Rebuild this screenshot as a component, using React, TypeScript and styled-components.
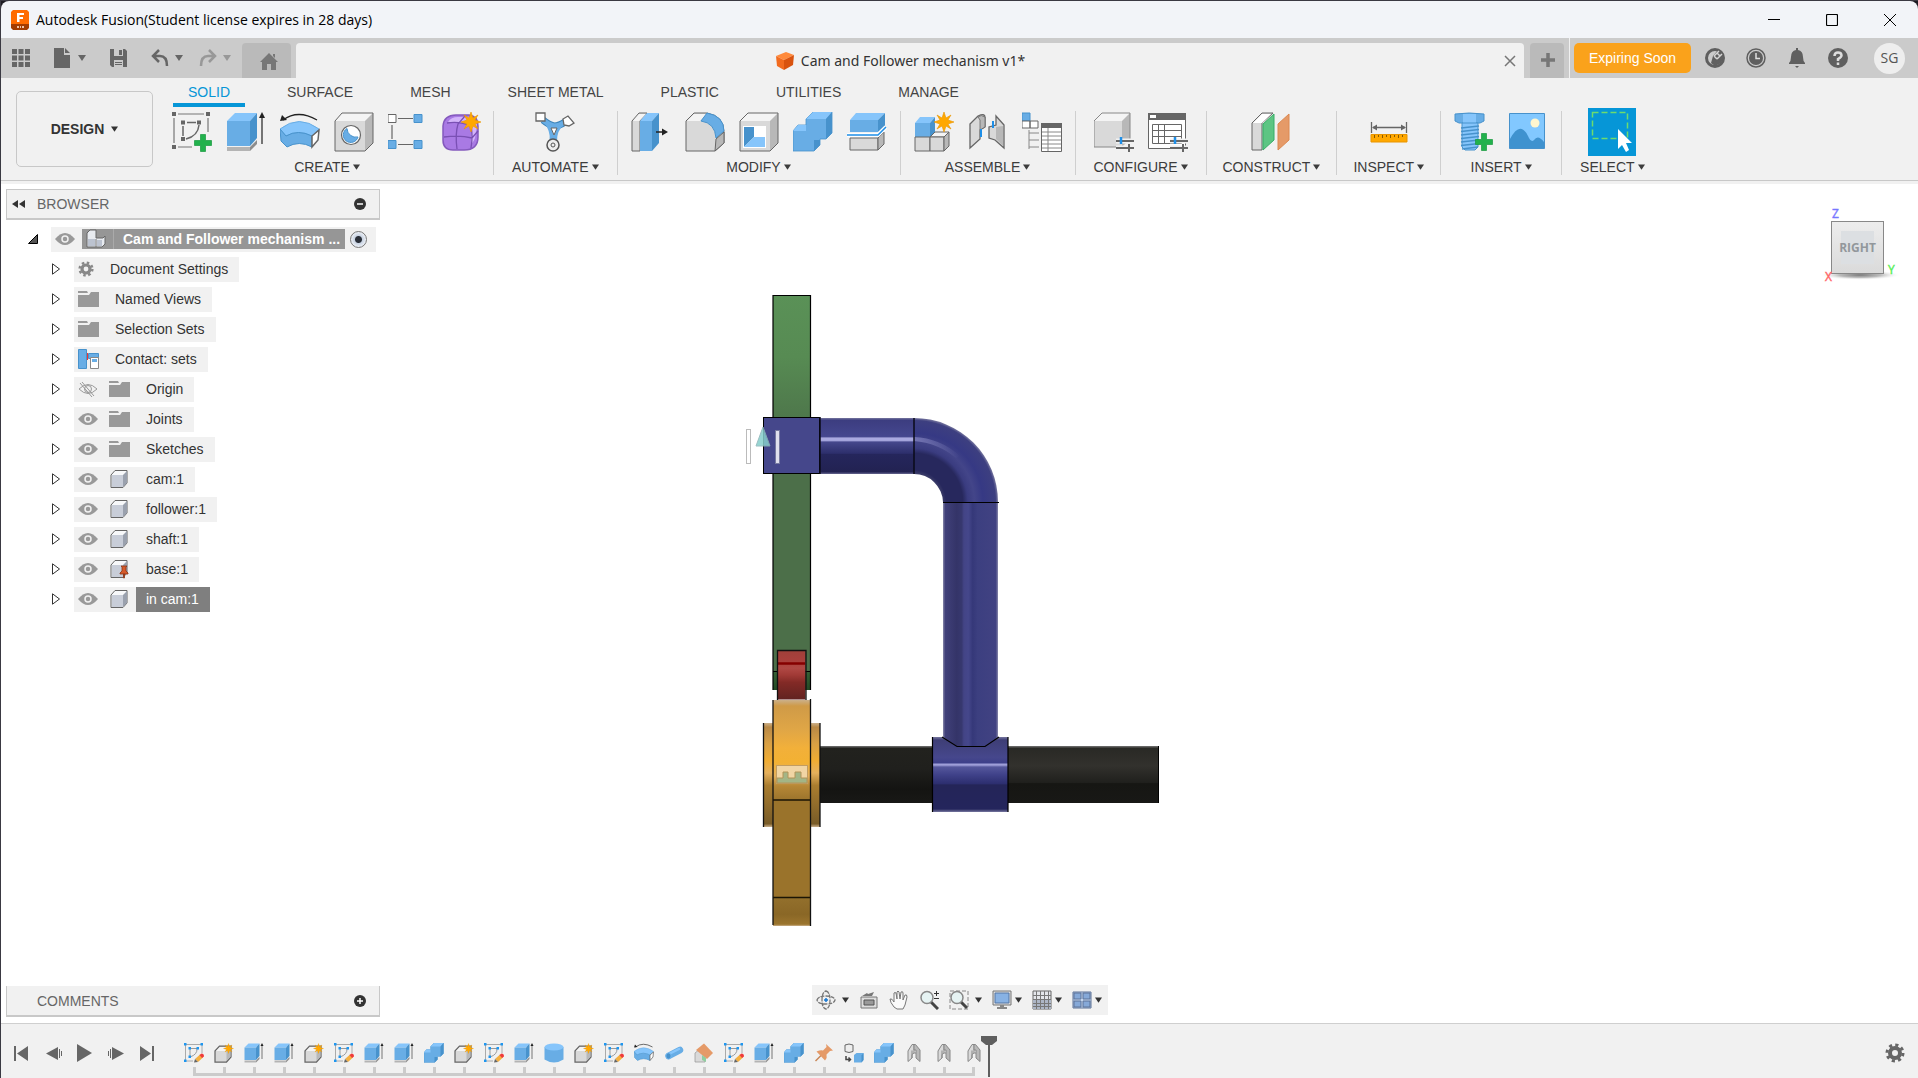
import React from "react";
import styled, { createGlobalStyle } from "styled-components";

const GlobalStyle = createGlobalStyle`
  * { box-sizing: border-box; }
  body { margin: 0; background: #1c1b22; }
  button { font: inherit; color: inherit; background: none; border: 0; padding: 0; cursor: pointer; }
  svg { display: block; flex: none; }
`;

const ui = `"Liberation Sans", Arial, sans-serif`;
const humanist = `"Open Sans", "Noto Sans", sans-serif`;

/* ---------- shell ---------- */

const Shell = styled.div`
  min-height: 100vh;
  display: flex;
  flex-direction: column;
  border-left: 1px solid #3a3942;
  border-top: 1px solid #3a3942;
  font: 14px/16px ${ui};
  color: #333;
`;

const TitleBar = styled.header`
  height: 37px;
  display: flex;
  align-items: center;
  gap: 7px;
  padding-left: 10px;
  background: #f2f4f8;
  border-radius: 8px 8px 0 0;
  color: #000;
  font: 14px/20px ${humanist};
  h1 { flex: 1; margin: 0; font: inherit; }
`;

const WindowControls = styled.div`
  display: flex;
  gap: 10px;
  padding-right: 4px;
  button { width: 48px; height: 36px; display: grid; place-items: center; }
`;

const TabBar = styled.div`
  height: 40px;
  display: flex;
  align-items: stretch;
  background: #cbcbcb;
  color: #666;
`;

const QuickTools = styled.div`
  display: flex;
  align-items: center;
  gap: 22px;
  padding-left: 10px;
`;

const ToolGroup = styled.div<{ $gap: number }>`
  display: flex;
  align-items: center;
  gap: ${(p) => p.$gap}px;
`;

const ToolButton = styled.button<{ $faded?: boolean }>`
  display: flex;
  align-items: center;
  gap: 5px;
  opacity: ${(p) => (p.$faded ? 0.5 : 1)};
`;

const ShortTab = styled.button<{ $w: number; $ml: number }>`
  width: ${(p) => p.$w}px;
  margin: 5px 0 0 ${(p) => p.$ml}px;
  padding-left: 4px;
  display: grid;
  place-items: center;
  background: #bababa;
  border-radius: 4px 4px 0 0;
  color: #777;
`;

const DocumentTab = styled.div`
  flex: 1;
  margin: 5px 0 0 5px;
  display: flex;
  align-items: center;
  padding: 1px 8px 0 0;
  background: #f1f1f1;
  border-radius: 4px 4px 0 0;
  color: #333;
  font: 14px/20px "Noto Sans", "Open Sans", sans-serif;
  > button:last-child { color: #777; }
`;

const DocumentName = styled.button`
  flex: 1;
  display: flex;
  justify-content: center;
  align-items: center;
  gap: 6px;
`;

const Account = styled.div`
  display: flex;
  align-items: center;
  margin-left: 5px;
  padding: 0 13px 0 4px;
  border-left: 1px solid #f1f1f1;
  color: #5f5f5f;
`;

const LicenseButton = styled.button`
  width: 117px;
  height: 30px;
  margin-right: 14px;
  border-radius: 5px;
  background: #faa21b;
  color: #fff;
`;

const Avatar = styled.button`
  width: 31px;
  height: 31px;
  margin-left: 26px;
  border-radius: 50%;
  background: #eee;
  color: #555;
  font: 14px/20px ${humanist};
`;

/* ---------- ribbon ---------- */

const Ribbon = styled.section`
  display: flex;
  gap: 8px;
  height: 106px;
  padding-left: 15px;
  background: #f1f1f1;
  border-bottom: 3px solid #f1f1f1;
  box-shadow: inset 0 -1px #c8c8c8;
`;

const WorkspaceButton = styled.button`
  width: 137px;
  height: 76px;
  margin-top: 13px;
  display: flex;
  align-items: center;
  justify-content: center;
  gap: 7px;
  border: 1px solid #c8c8c8;
  border-radius: 5px;
  font-weight: bold;
`;

const RibbonTabs = styled.nav`
  display: flex;
  gap: 27px;
  padding-left: 12px;
`;

const RibbonTab = styled.button<{ $active?: boolean }>`
  height: 29px;
  padding: 3px 15px 0;
  border-bottom: 4px solid ${(p) => (p.$active ? "#0696d7" : "transparent")};
  color: ${(p) => (p.$active ? "#0696d7" : "#444")};
`;

const Panels = styled.div`
  display: flex;
  margin-top: 4px;
`;

const Panel = styled.div<{ $pad: number }>`
  height: 64px;
  display: flex;
  flex-direction: column;
  align-items: center;
  gap: 7px;
  padding: 1px ${(p) => p.$pad}px 0;
  border-right: 1px solid #cfcfcf;
  &:last-child { border: 0; }
`;

const IconRow = styled.div`
  display: flex;
  gap: 14px;
`;

const SelectedTool = styled.button`
  width: 48px;
  height: 48px;
  margin: -4px;
  background: #0696d7;
`;

const PanelLabel = styled.button`
  display: flex;
  align-items: center;
  gap: 3px;
  white-space: nowrap;
  color: #3c3c3c;
`;

/* ---------- viewport ---------- */

const Viewport = styled.main`
  position: relative;
  flex: 1;
  min-height: 700px;
  display: flex;
  align-items: center;
  justify-content: center;
  background: #fff;
`;

const BrowserDock = styled.aside`
  position: absolute;
  top: 5px;
  left: 5px;
  width: 374px;
`;

const CommentsDock = styled.aside`
  position: absolute;
  bottom: 6px;
  left: 5px;
  width: 374px;
`;

const DockHeader = styled.div<{ $flatTop?: boolean }>`
  height: 31px;
  display: flex;
  align-items: center;
  padding: 0 13px 0 4px;
  background: #f1f1f1;
  border: 1px solid #c8c8c8;
  border-bottom-width: 2px;
  border-top-width: ${(p) => (p.$flatTop ? 0 : 1)}px;
  color: #666;
  h2 { flex: 1; margin: 0; font: inherit; }
`;

const HeaderSlot = styled.span`
  width: 26px;
  display: flex;
`;

const Tree = styled.ul`
  list-style: none;
  margin: 0;
  padding: 4px 0 0;
`;

const TreeRow = styled.li<{ $root?: boolean }>`
  height: 30px;
  display: flex;
  align-items: center;
  padding-left: ${(p) => (p.$root ? 22 : 45)}px;
`;

const Expander = styled.button<{ $w: number }>`
  width: ${(p) => p.$w}px;
`;

const Entry = styled.div`
  height: 25px;
  display: flex;
  align-items: center;
  background: #f1f1f1;
  color: #888;
`;

const IconCell = styled.span`
  width: 31px;
  display: flex;
  padding-left: 4px;
`;

const EntryLabel = styled.button<{ $picked?: boolean; $tight?: boolean }>`
  height: 25px;
  padding: 0 11px 0 ${(p) => (p.$tight ? 5 : 10)}px;
  background: ${(p) => (p.$picked ? "#7f7f7f" : "none")};
  color: ${(p) => (p.$picked ? "#fff" : "#333")};
`;

const RootEntry = styled(Entry)`
  flex: 1;
  margin-right: 4px;
`;

const RootName = styled.button`
  width: 263px;
  height: 20px;
  display: flex;
  align-items: center;
  background: #969696;
  color: #fff;
  font-weight: bold;
`;

const RootTitle = styled.span`
  padding-left: 9px;
  border-left: 1px solid #aaa;
  line-height: 20px;
  white-space: nowrap;
`;

const ActiveRadio = styled.input`
  appearance: none;
  width: 17px;
  height: 17px;
  margin: 0 0 0 5px;
  border: 1px solid #777;
  border-radius: 50%;
  background: radial-gradient(circle, #2a2f38 0 3px, #c9d3e2 4px, #f2f5fa 8px);
`;

const CubeSlot = styled.div`
  position: absolute;
  top: 16px;
  right: 17px;
`;

const NavBar = styled.div`
  position: absolute;
  bottom: 8px;
  left: 50%;
  transform: translateX(-50%);
  height: 30px;
  display: flex;
  align-items: center;
  gap: 10px;
  padding: 0 6px 0 4px;
  background: #f1f1f1;
`;

const NavButton = styled.button<{ $gap: number }>`
  display: flex;
  align-items: center;
  gap: ${(p) => p.$gap}px;
`;

/* ---------- timeline ---------- */

const Timeline = styled.footer`
  height: 55px;
  display: flex;
  align-items: flex-start;
  padding: 0 13px 0 11px;
  background: #f1f1f1;
  border-top: 1px solid #cfcfcf;
  color: #666;
`;

const Playback = styled.div`
  display: flex;
  gap: 11px;
  padding: 19px 23px 0 0;
`;

const History = styled.ol`
  list-style: none;
  display: flex;
  margin: 0;
  padding: 19px 0 0;
`;

const Step = styled.li`
  width: 30px;
  display: flex;
  flex-direction: column;
  align-items: center;
  gap: 4px;
  &::after {
    content: "";
    width: 30px;
    height: 9px;
    background: linear-gradient(#cbcbcb, #cbcbcb) center / 3px 100% no-repeat,
      linear-gradient(#cbcbcb, #cbcbcb) bottom / 100% 3px no-repeat;
  }
  &:first-child::after, &:last-child::after {
    background: linear-gradient(#cbcbcb, #cbcbcb) center / 3px 100% no-repeat,
      linear-gradient(#cbcbcb, #cbcbcb) bottom right / 16px 3px no-repeat;
  }
  &:last-child::after { transform: scaleX(-1); }
`;

const Marker = styled.button`
  margin: 12px 0 0 -8px;
`;

const SettingsButton = styled.button`
  margin: 19px 0 0 auto;
`;

/* ---------- shared glyphs ---------- */

const T = "#86c5fb", F = "#68ade5", S = "#4792cc";
const GT = "#f4f4f4", GF = "#d9d9d9", GS = "#b8b8b8", K = "#666";

const Caret = ({ w = 8 }: { w?: number }) => (
  <svg width={w} height="6" viewBox="0 0 8 6" fill="currentColor"><path d="M0 0H8L4 6Z" /></svg>
);

const Art = ({ size = 40, children }: { size?: number; children: React.ReactNode }) => (
  <svg width={size} height={size} viewBox="0 0 40 40" fill="none">{children}</svg>
);

const Small = ({ w = 20, h = 20, children }: { w?: number; h?: number; children: React.ReactNode }) => (
  <svg width={w} height={h} viewBox={`0 0 ${w} ${h}`} fill="none">{children}</svg>
);

const Star = ({ x, y }: { x: number; y: number }) => (
  <path transform={`translate(${x} ${y})`} fill="#ffa800" stroke="#e99500" strokeWidth=".6"
    d="M0-10 2-4 7-7 4-2 10 0 4 2 7 7 2 4 0 10-2 4-7 7-4 2-10 0-4-2-7-7-2-4Z" />
);

const Plus = ({ x = 31, y = 31 }: { x?: number; y?: number }) => (
  <path transform={`translate(${x} ${y})`} fill="#22b14c" stroke="#179a3e" strokeWidth=".7"
    d="M-2.500-8.500H2.500V-2.500H8.500V2.500H2.500V8.500H-2.500V2.500H-8.500V-2.500H-2.500Z" />
);

const SketchIcon = () => (
  <Art>
    <path d="M6 2H32M36 6V20M2 6V31M6 35H20" stroke="#777" strokeWidth="1.200" />
    <path d="M15 10.500H24M11 14V24M27 13Q26 24 14 27" stroke={K} strokeWidth="1.500" />
    <path fill={K} d="M0 0h4v4H0zM34 0h4v4h-4zM0 33h4v4H0zM9 8.500h4v4H9zM25 8.500h4v4h-4zM9 25h4v4H9z" />
    <Plus />
  </Art>
);

const EditSketchIcon = () => (
  <Art size={20}>
    <path d="M3 3H36V20M3 3V36H18" stroke="#aaa" strokeWidth="2" />
    <path d="M12 11H26Q27 23 12 28Z" stroke="#999" strokeWidth="2" />
    <path fill="#1e96f0" d="M0 0h5v5H0zM33 0h5v5h-5zM0 33h5v5H0zM9 8h5v5H9zM25 8h5v5h-5zM9 25h5v5H9z" />
    <path fill="#f5b041" d="m22 32 10-9 6 6-10 9z" /><path fill="#ef3b3b" d="m31 24 4-3q5 0 5 6l-4 3z" />
    <path fill="#666" d="m20 39 2-7 6 6z" />
  </Art>
);

const ExtrudeIcon = ({ size }: { size?: number }) => (
  <Art size={size}>
    <path fill={T} d="M1 9 9 1H31L24 9Z" /><path fill={F} d="M1 9H24V34H1Z" /><path fill={S} d="M24 9 31 1V26L24 34Z" />
    <path fill="#b4b4b4" d="M1 35H24V39H1Z" /><path fill="#8c8c8c" d="M24 35 31 28V32L24 39Z" />
    <path d="M36 32V3" stroke="#222" strokeWidth="1.200" /><path fill="#222" d="M36 0 39 6H33Z" />
  </Art>
);

const RevolveIcon = ({ size }: { size?: number }) => (
  <Art size={size}>
    <path d="M3 8Q18-3 37 8" stroke="#222" strokeWidth="1.300" /><path fill="#222" d="M0 9 2 3 7 8Z" />
    <path fill={T} stroke={F} d="M0 17Q19 2 39 17L32 24Q18 17 6 24Z" />
    <path fill={F} stroke={S} d="M0 17 6 24Q18 17 32 24V35Q19 28 7 35L1 29Z" />
    <path fill="#fff" stroke={K} strokeWidth="1.500" d="M32 24 39 18 38 28 32 35Z" />
  </Art>
);

const HoleIcon = () => (
  <Art>
    <path fill={GT} d="M1 9 8 1H39L31 9Z" /><path fill={GF} d="M1 9H31V39H1Z" /><path fill={GS} d="M31 9 39 1V31L31 39Z" />
    <path stroke={K} d="M1 9 8 1H39V31L31 39H1Z" />
    <circle cx="17" cy="23" r="9.500" fill="#fff" stroke={K} strokeWidth="1.200" />
    <path fill={F} stroke={S} d="M13 16.500A7.500 7.500 0 1 0 24 25 9 9 0 0 1 13 16.500Z" />
  </Art>
);

const PatternIcon = () => (
  <Art>
    <path d="M10 6.500H25M4 13V27M10 32.500H25" stroke={K} strokeWidth="1.200" />
    <path fill="#fff" stroke={K} d="M0 2.500h8v8H0z" />
    <path fill={F} stroke={S} d="M26 2.500h8v8h-8zM0 28.500h8v8H0zM26 28.500h8v8h-8z" />
  </Art>
);

const FormIcon = () => (
  <Art>
    <path fill="#a97ae4" stroke="#8459bd" strokeWidth="1.500" d="M1 14Q2 3 14 3H27Q36 4 36 14V25Q36 38 22 38H11Q1 38 1 28Z" />
    <path fill="#d3b4fa" d="M6 10Q9 5 16 5H28Q34 7 35 14L33 26Q31 31 29 32V14Q27 11 22 11H10Z" />
    <path stroke="#7a50b4" strokeWidth="1.300" d="M2 25Q18 23 30 26L36 19M15 37Q13 22 16 12L23 4M29 36Q31 24 29 14L34 8M5 11Q18 9 29 14" />
    <Star x={29} y={10} />
  </Art>
);

const AutomateIcon = () => (
  <Art>
    <path stroke="#3b83b9" strokeWidth="7" d="M8 8Q14 13 19 14Q24 14 30 10M19 14 18 32" />
    <path stroke={F} strokeWidth="5" d="M8 8Q14 13 19 14Q24 14 30 10M19 14 18 32" />
    <path fill={F} d="M10 12Q15 18 15 29H22Q22 18 29 13Q19 15 10 12Z" />
    <path fill="#fff" stroke={K} d="M16 16H22L19 23Z" />
    <path fill="#fff" stroke={K} strokeWidth="1.300" d="M1 1h9v8H1zM28 7 33 4 39 11 34 14 29 13Z" />
    <circle cx="18" cy="33" r="6" fill="#eee" stroke="#555" strokeWidth="1.500" /><circle cx="18" cy="33" r="2" stroke="#555" />
  </Art>
);

const PressPullIcon = () => (
  <Art>
    <path fill={GF} stroke={K} d="M1 9 8 1H16L9 9V39H1Z" /><path fill={GT} d="M2 9 8 2H15L8 9Z" />
    <path fill={T} d="M9 9 16 1H28L21 9Z" /><path fill={F} d="M9 9H21V39H9Z" /><path fill={S} d="M21 9 28 1V31L21 39Z" />
    <path d="M25 20H33" stroke="#222" strokeWidth="1.500" /><path fill="#222" d="M31 16.500 37 20 31 23.500Z" />
  </Art>
);

const FilletIcon = () => (
  <Art>
    <path fill={GF} stroke={K} d="M1 9 9 1H22Q39 4 39 20V31L30 39H1Z" />
    <path fill={GT} d="M2 9 9 2H22L15 9Z" />
    <path fill={F} stroke={S} d="M22 1Q39 4 39 19L31 26Q30 11 16 9Z" />
    <path fill={GS} stroke={K} d="M31 27 39 20V31L30 39Z" />
  </Art>
);

const ShellIcon = () => (
  <Art>
    <path fill={GT} d="M1 9 9 1H39L31 9Z" /><path fill={GF} d="M1 9H31V39H1Z" /><path fill={GS} d="M31 9 39 1V31L31 39Z" />
    <path stroke={K} d="M1 9 9 1H39V31L31 39H1Z" />
    <path fill="#fff" d="M4 14H27V36H4Z" /><path fill={S} d="M5 15H15V25L5 35Z" /><path fill={T} d="M15 25H26V35H5Z" />
  </Art>
);

const CombineIcon = ({ size }: { size?: number }) => (
  <Art size={size}>
    <path fill={F} stroke={S} strokeWidth=".800" d="M0 19 5 13H13V7L20 0H39V21L33 27H27V33L21 39H0Z" />
    <path fill={T} d="M0 19 5 13H13V19ZM13 7 20 0H39L33 7Z" />
    <path fill={S} d="M33 7 39 0V21L33 27ZM21 28H27V33L21 39Z" />
  </Art>
);

const SplitIcon = () => (
  <Art>
    <path fill={T} d="M3 8 9 1H38L31 8Z" /><path fill={F} d="M3 8H31V20H3Z" /><path fill={S} d="M31 8 38 1V14L31 20Z" />
    <path fill={GF} stroke={K} d="M3 26H31V38H3Z" /><path fill={GS} stroke={K} d="M31 26 37 20V32L31 38Z" />
    <path stroke="#fff" strokeWidth="4" d="M0 23H31L39 15" /><path stroke="#1e8fe8" strokeWidth="1.500" d="M0 23H31L39 15" />
  </Art>
);

const NewComponentIcon = () => (
  <Art>
    <path fill={F} d="M1 11H16V25H1Z" /><path fill={T} d="M1 11 6 5H21L16 11Z" /><path fill={S} d="M16 11 21 5V20L16 25Z" />
    <path fill={GF} stroke={K} d="M1 25H16V39H1Z" /><path fill={GT} stroke={K} d="M16 25 21 20H35L30 25Z" />
    <path fill={GF} stroke={K} d="M16 25H30V39H16Z" /><path fill={GS} stroke={K} d="M30 25 35 20V34L30 39Z" />
    <Star x={30} y={10} />
  </Art>
);

const JointIcon = () => (
  <Art>
    <path fill={GF} stroke={K} strokeWidth="1.300" d="M2 12 10 4Q17 1 17 5V15L12 18V27L2 36Z" />
    <path fill={GS} stroke={K} strokeWidth=".800" d="M10 5Q13 2 17 5V15L12 18V8Z" />
    <path fill={GF} stroke={K} strokeWidth="1.300" d="M36 13 28 4V13L21 15V26L27 28 36 36Z" />
    <path fill={GS} d="M28 15 35 14V34L28 27Z" />
    <path stroke="#1e8fe8" strokeWidth="2" d="M13 17V25M25 9V16" />
  </Art>
);

const JointStepIcon = () => (
  <Art size={20}>
    <path fill={GF} stroke="#888" strokeWidth="2" d="M8 16 16 3H20V20L16 23V30L8 37Z" />
    <path fill={GS} stroke="#888" strokeWidth="2" d="M20 3H23L32 14V37L24 30V14H20Z" />
    <path stroke="#888" strokeWidth="2" d="M16 15V30M20 20H24" />
  </Art>
);

const BomIcon = () => (
  <Art>
    <path fill={F} stroke={S} d="M0 1h8v8H0z" /><path fill="#fff" stroke={K} d="M0 9h8v7H0zM8 9h8v7H8z" />
    <path stroke="#888" d="M7 18V37M7 21H17M7 28H17M7 35H17" />
    <path fill="#fff" stroke={K} d="M19.500 11.500H39.500V39.500H19.500Z" /><path fill={K} d="M19 11H40V16H19Z" />
    <path stroke="#888" d="M20 20H39M20 24H39M20 28H39M20 32H39M20 36H39M26 16V39" />
  </Art>
);

const Sliders = () => (
  <>
    <path stroke="#f1f1f1" strokeWidth="5" d="M22 29H40M22 36H40" />
    <path stroke={K} strokeWidth="2" d="M22 29H40M22 36H40M35 32V40" /><path stroke="#1e8fe8" strokeWidth="2.500" d="M27 25V32" />
  </>
);

const ConfigureIcon = () => (
  <Art>
    <path fill={GT} d="M0 9 8 1H36L28 9Z" /><path fill={GF} d="M0 9H28V35H0Z" /><path fill={GS} d="M28 9 36 1V27L28 35Z" />
    <path stroke="#888" d="M0 9 8 1H36V27M0 9V35H22" /><Sliders />
  </Art>
);

const ConfigTableIcon = () => (
  <Art>
    <path fill="#fff" stroke={K} d="M.500 1.500H37.500V36.500H.500Z" /><path fill={K} d="M0 1H38V8H0Z" /><path fill="#fff" d="M2 3H8V6H2Z" />
    <path stroke={K} d="M4.500 12.500H33.500V31.500H4.500ZM4.500 18.500H33.500M4.500 24.500H33.500M10.500 12V31M16.500 12V31" /><Sliders />
  </Art>
);

const PlaneIcon = () => (
  <Art>
    <path fill={GF} stroke={K} d="M1 11 11 1H22L11 11V38H1Z" /><path fill="#fff" d="M2 11 11 2H20L11 11Z" />
    <path fill="#5dc583" stroke="#37ad66" d="M12 12 23 2V28L12 38Z" />
    <path fill="#e59a68" stroke="#dc8850" d="M27 12 38 2V28L27 38Z" />
  </Art>
);

const MeasureIcon = () => (
  <Art>
    <path stroke={K} d="M2.500 10V21M37.500 10V21M4 15.500H36" strokeWidth="1.300" /><path fill={K} d="M3 15.500 8 12.500V18.500ZM37 15.500 32 12.500V18.500Z" />
    <path fill="#ffa800" stroke="#e99500" d="M2 22.500H38V30H2Z" />
    <path stroke="#885800" d="M5.500 23V26M9.500 23V25M13.500 23V26M17.500 23V25M21.500 23V26M25.500 23V25M29.500 23V26M33.500 23V25" />
  </Art>
);

const BoltIcon = () => (
  <Art>
    <path fill={F} stroke={S} d="M1 2Q15 0 30 2V9L26 11H5L1 9Z" /><path fill={T} d="M9 2H22V11H9Z" />
    <path fill={T} stroke={S} d="M8 11H24V35L21 38H11L8 35Z" />
    <path stroke={S} strokeWidth="1.300" d="M7 16 25 14M7 19.500 25 17.500M7 23 25 21M7 26.500 25 24.500M7 30 25 28M7 33.500 25 31.500M8 37 24 35" />
    <Plus x={30} y={30} />
  </Art>
);

const CanvasIcon = () => (
  <Art>
    <path fill="#82c8ff" stroke={S} d="M1.500 1.500H36.500V36.500H1.500Z" /><circle cx="27" cy="11" r="4.500" fill="#fff6cf" />
    <path fill="#3f92cf" d="M2 27Q12 8 20 24 23 31 26 28 30 22 36 30V36H2Z" />
  </Art>
);

const SelectIcon = () => (
  <svg width="48" height="48" viewBox="0 0 48 48" fill="none">
    <path d="M4.500 4.500H39.500V30.500H4.500Z" stroke="#6ddc6d" strokeWidth="1.500" strokeDasharray="6 3" />
    <path fill="#fff" d="M30 21V41L34 37 38 44 41 42 38 35H44Z" />
  </svg>
);

const CylinderIcon = () => (
  <Art size={20}><path fill={F} d="M1 8V33Q20 45 39 33V8Z" /><ellipse cx="20" cy="8" rx="19" ry="7" fill={T} /></Art>
);
const ComponentStepIcon = () => (
  <Art size={20}>
    <path fill={GF} stroke={K} strokeWidth="2.500" d="M2 16 11 6H34V28L25 38H2Z" /><path fill={GT} d="M4 16 12 8H30L24 16Z" /><path fill={GS} d="M25 16 33 9V27L25 36Z" /><Star x={29} y={11} />
  </Art>
);
const PipeIcon = () => (
  <Art size={20}><path stroke={F} strokeWidth="13" strokeLinecap="round" d="M9 26 32 14" /><path stroke={T} strokeWidth="5" strokeLinecap="round" d="M12 21 30 12" /><ellipse cx="9" cy="26" rx="5" ry="6" fill={S} stroke={T} /></Art>
);
const SplitStepIcon = () => (
  <Art size={20}><path fill={GF} stroke="#999" strokeWidth="1.500" d="M2 20 12 12 22 22V38H2Z" /><path fill="#e59a68" d="M4 14 20 1 38 20 26 32Z" /><path fill="#8fce9f" d="M16 24 24 30V38L16 34Z" /></Art>
);
const PinIcon = () => (
  <Art size={20}><path stroke="#c88455" strokeWidth="3" d="M3 36 15 24" /><path fill="#e59a68" d="M5 17Q14 13 18 15L25 8 24 2 38 15 32 16 25 23Q27 29 22 35Z" /></Art>
);
const CopyIcon = () => (
  <Art size={20}><path fill="#eee" stroke={K} strokeWidth="2" d="M2 4Q10 0 18 4V17Q10 21 2 17Z" /><path stroke="#444" strokeWidth="3" d="M4 26V33H12M9 29 13 33 9 37" /><path fill={F} d="M20 24 25 20H39V34L35 39H20Z" /><path fill={S} d="M35 25 39 20V34L35 39Z" /></Art>
);

const Eye = ({ off }: { off?: boolean }) => off ? (
  <Small><path stroke="#999" d="M1 10Q10 1 19 10 10 19 1 10ZM4 3 16 17M2 4 14 18" /><circle cx="10" cy="10" r="3.500" stroke="#999" /></Small>
) : (
  <Small><path fill="#999" d="M0 10Q10-2 20 10 10 22 0 10Z" /><circle cx="10" cy="10" r="3" stroke="#f1f1f1" strokeWidth="1.500" /></Small>
);
const Folder = () => <Small w={21}><path fill="#999" d="M0 2H9L10 4H0ZM0 6H11L13 3H21V18H0Z" /></Small>;
const BodyIcon = ({ pinned }: { pinned?: boolean }) => (
  <Small>
    <path fill="#f7f8fa" stroke="#666" d="M2 6 6 1.500H18V14L14 18.500H2Z" /><path fill="#c8cdd8" d="M3 6H14V18H3Z" /><path fill="#9aa1ae" d="M14 6 18 2V14L14 18Z" />
    {pinned && <path fill="#d65a2b" stroke="#8c3414" strokeWidth=".800" d="M12 7H18L17 8V12L19 14V15H11V14L13 12V8ZM14.500 15h1v4h-1z" />}
  </Small>
);
const AssemblyIcon = () => (
  <Small><path fill="#e8ebf0" stroke="#666" d="M1 4 4 1H10V9H17L19 7V15L16 18H1Z" /><path fill="#bcc3d0" d="M2 10H9V17H2ZM11 11H16V17H11Z" /><path stroke="#777" d="M10 10V18" /></Small>
);
const Gear = ({ size = 20 }: { size?: number }) => (
  <svg width={size} height={size} viewBox="0 0 20 20" fill="none">
    <circle cx="10" cy="10" r="5" stroke="currentColor" strokeWidth="4" />
    <circle cx="10" cy="10" r="8" stroke="currentColor" strokeWidth="3" strokeDasharray="3.142 3.142" />
  </svg>
);
const ContactIcon = () => (
  <Small w={21}><path fill={F} stroke={S} d="M.500.500h8v19h-8zM10.500 4.500h10v5h-10z" /><path stroke="#e33" d="M9.500 4V11" /><path fill="#fff" stroke="#888" d="M12.500 8.500h8v11h-8z" /><path fill={F} d="M14 10h5v3h-5z" /></Small>
);

const RoundSign = ({ plus }: { plus?: boolean }) => (
  <Small w={12} h={12}><circle cx="6" cy="6" r="6" fill="#333" /><path stroke="#fff" strokeWidth="1.500" d={plus ? "M3 6H9M6 3V9" : "M3 6H9"} /></Small>
);

/* ---------- 3D model ---------- */

const Model = () => (
  <svg width="433" height="649" viewBox="743 279 433 649" role="img" aria-label="Cam and follower assembly">
    <defs>
      <linearGradient id="green" x2="0" y2="1"><stop offset="0" stopColor="#5a9157" /><stop offset=".5" stopColor="#578b53" /><stop offset="1" stopColor="#4e774b" /></linearGradient>
      <linearGradient id="foot" x2="0" y2="1"><stop stopColor="#366236" /><stop offset="1" stopColor="#234a24" /></linearGradient>
      <linearGradient id="arm" x2="0" y2="1">
        <stop stopColor="#77779f" /><stop offset=".04" stopColor="#3c3d80" /><stop offset=".33" stopColor="#45478f" /><stop offset=".36" stopColor="#a9a9e0" /><stop offset=".4" stopColor="#a9a9e0" /><stop offset=".43" stopColor="#45478c" /><stop offset=".63" stopColor="#2d2f6c" /><stop offset=".65" stopColor="#25265c" /><stop offset=".96" stopColor="#222252" /><stop offset="1" stopColor="#666690" />
      </linearGradient>
      <radialGradient id="elbow" gradientUnits="userSpaceOnUse" cx="914" cy="502" r="84">
        <stop offset=".34" stopColor="#3a3b68" /><stop offset=".38" stopColor="#27285d" /><stop offset=".58" stopColor="#27285d" /><stop offset=".64" stopColor="#3a3c80" /><stop offset=".72" stopColor="#434589" /><stop offset=".82" stopColor="#363984" /><stop offset=".97" stopColor="#3d3f80" /><stop offset="1" stopColor="#77779f" />
      </radialGradient>
      <linearGradient id="glint" x2="1"><stop stopColor="#aaaae0" /><stop offset="1" stopColor="#aaaae0" stopOpacity="0" /></linearGradient>
      <linearGradient id="post" x2="1">
        <stop stopColor="#8888aa" /><stop offset=".04" stopColor="#40407a" /><stop offset=".25" stopColor="#343468" /><stop offset=".34" stopColor="#37386f" /><stop offset=".38" stopColor="#434486" /><stop offset=".46" stopColor="#45478b" /><stop offset=".54" stopColor="#353879" /><stop offset=".63" stopColor="#3c3f80" /><stop offset=".96" stopColor="#414282" /><stop offset="1" stopColor="#8888aa" />
      </linearGradient>
      <linearGradient id="collar" x2="0" y2="1">
        <stop stopColor="#77779f" /><stop offset=".04" stopColor="#3e3e76" /><stop offset=".27" stopColor="#46478c" /><stop offset=".34" stopColor="#3e408a" /><stop offset=".37" stopColor="#aaaae2" /><stop offset=".4" stopColor="#55579c" /><stop offset=".5" stopColor="#40428a" /><stop offset=".62" stopColor="#2d2f70" /><stop offset=".64" stopColor="#242558" /><stop offset=".96" stopColor="#24255c" /><stop offset="1" stopColor="#77779f" />
      </linearGradient>
      <linearGradient id="shaft" x2="0" y2="1"><stop stopColor="#777" /><stop offset=".04" stopColor="#22221e" /><stop offset=".4" stopColor="#20201d" /><stop offset=".75" stopColor="#141412" /><stop offset="1" stopColor="#181816" /></linearGradient>
      <linearGradient id="shaftEnd" x2="0" y2="1"><stop stopColor="#777" /><stop offset=".04" stopColor="#292925" /><stop offset=".35" stopColor="#32312d" /><stop offset=".64" stopColor="#20201d" /><stop offset=".66" stopColor="#161613" /><stop offset="1" stopColor="#181816" /></linearGradient>
      <linearGradient id="cam" x2="0" y2="1">
        <stop stopColor="#cbb08a" /><stop offset=".06" stopColor="#cf9a47" /><stop offset=".3" stopColor="#e0a646" /><stop offset=".48" stopColor="#f2b03a" /><stop offset=".62" stopColor="#f3b133" /><stop offset=".76" stopColor="#e5b05c" /><stop offset=".86" stopColor="#b68736" /><stop offset="1" stopColor="#9c742c" />
      </linearGradient>
      <linearGradient id="hub" x2="0" y2="1">
        <stop stopColor="#cbb08a" /><stop offset=".04" stopColor="#b98946" /><stop offset=".2" stopColor="#d9a044" /><stop offset=".36" stopColor="#f0ac32" /><stop offset=".48" stopColor="#e5b05c" /><stop offset=".6" stopColor="#aa7d2f" /><stop offset=".97" stopColor="#795c28" /><stop offset="1" stopColor="#cbb08a" />
      </linearGradient>
      <linearGradient id="camBase" x2="0" y2="1"><stop stopColor="#93702d" /><stop offset=".6" stopColor="#8a6726" /><stop offset=".94" stopColor="#9b752e" /><stop offset="1" stopColor="#cbb08a" /></linearGradient>
      <linearGradient id="roller" x2="0" y2="1"><stop stopColor="#a0403a" /><stop offset=".2" stopColor="#a9403c" /><stop offset=".36" stopColor="#b04844" /><stop offset=".5" stopColor="#a13a36" /><stop offset=".65" stopColor="#832a26" /><stop offset="1" stopColor="#612221" /></linearGradient>
    </defs>

    <rect x="773" y="295" width="37" height="123" fill="url(#green)" />
    <rect x="773" y="474" width="37" height="197" fill="#4c6f49" />
    <rect x="773" y="671" width="37" height="19" fill="url(#foot)" />
    <path d="M773 690V295.500H810.500V690M773 671.500H810" fill="none" stroke="#000" strokeWidth="1.200" />

    <rect x="820" y="418" width="94" height="56" fill="url(#arm)" />
    <path d="M914 418A84 84 0 0 1 998 502H943A29 29 0 0 0 914 474Z" fill="url(#elbow)" />
    <path d="M914 437Q940 438 960 456L956 458Q938 443 914 441Z" fill="url(#glint)" opacity=".5" />
    <rect x="763.500" y="417.500" width="56" height="56" fill="#45478b" stroke="#000" />
    <path d="M820 417V474M914 418V474" stroke="#0a0a18" strokeWidth="1.500" />

    <rect x="820" y="746" width="112" height="57" fill="url(#shaft)" />
    <rect x="1008" y="746" width="151" height="57" fill="url(#shaftEnd)" /><path d="M1158.500 746V803" stroke="#000" />
    <rect x="932" y="737" width="76" height="75" fill="url(#collar)" />
    <path d="M943 502H998V737L985 746H957L943 737Z" fill="url(#post)" />
    <path d="M943 502.500H999M942 737 957 746.500H985L999 737M932.500 737V812M1008 737V812" fill="none" stroke="#000" strokeWidth="1.200" />

    <rect x="763" y="723" width="57" height="104" fill="url(#hub)" /><path d="M763.500 723V827M820 723V827" stroke="#111" strokeWidth="1.300" />
    <rect x="773" y="700" width="37" height="100" fill="url(#cam)" />
    <rect x="773" y="800" width="37" height="97" fill="#9a732b" /><rect x="773" y="897" width="37" height="29" fill="url(#camBase)" />
    <path d="M773 700V925M810.500 699V926" stroke="#111" strokeWidth="1.300" /><path d="M773 800H810M773 897.500H810" stroke="#1b1505" strokeWidth="1.300" />
    <rect x="776.500" y="765.500" width="31" height="18" fill="#f1d5a4" stroke="#c29d62" />
    <path d="M777 778H783V772H788V778H795V772H801V778H807V783H777Z" fill="#a3b586" stroke="#b19458" />

    <rect x="777.500" y="650.500" width="28" height="49" fill="url(#roller)" /><path d="M778 663.500H805" stroke="#850000" strokeWidth="2.500" />
    <path d="M777.500 700V650.500H806V700" fill="none" stroke="#111" strokeWidth="1.300" />

    <rect x="746.500" y="429.500" width="4" height="34" fill="#fff" stroke="#bbb" />
    <path d="M763 427 756 446H770Z" fill="#86cfcc" stroke="#8ab5b8" opacity=".85" />
    <rect x="775.500" y="430.500" width="4" height="33" fill="#e0e0ed" stroke="#777aa0" />
  </svg>
);

const ViewCube = () => (
  <svg width="84" height="84" viewBox="1817 200 84 84" role="img" aria-label="View cube">
    <defs>
      <linearGradient id="face" x2="0" y2="1"><stop stopColor="#ededed" /><stop offset="1" stopColor="#dadada" /></linearGradient>
      <radialGradient id="shade"><stop stopColor="#777" /><stop offset=".5" stopColor="#aaa" stopOpacity=".8" /><stop offset="1" stopColor="#fff" stopOpacity="0" /></radialGradient>
    </defs>
    <ellipse cx="1860" cy="275" rx="41" ry="5" fill="url(#shade)" />
    <rect x="1831.500" y="221.500" width="52" height="52" fill="url(#face)" stroke="#888" />
    <rect x="1841" y="231" width="33" height="33" fill="#dcdfe2" />
    <g fontFamily="Open Sans, Noto Sans, sans-serif" fontSize="12">
      <text x="1857.500" y="252" textAnchor="middle" fontWeight="bold" fill="#92979b">RIGHT</text>
      <text x="1832" y="218" fill="#7777ff" stroke="#7777ff" strokeWidth=".4">Z</text>
      <text x="1825" y="281" fill="#f66" stroke="#f66" strokeWidth=".4">X</text>
      <text x="1888" y="274" fill="#5e5" stroke="#5e5" strokeWidth=".4">Y</text>
    </g>
  </svg>
);

/* ---------- data ---------- */

const tabs = ["SOLID", "SURFACE", "MESH", "SHEET METAL", "PLASTIC", "UTILITIES", "MANAGE"];

const panels: { name: string; pad: number; icons: [string, React.ReactNode][] }[] = [
  { name: "CREATE", pad: 11, icons: [["Create sketch", <SketchIcon />], ["Extrude", <ExtrudeIcon />], ["Revolve", <RevolveIcon />], ["Hole", <HoleIcon />], ["Pattern", <PatternIcon />], ["Create form", <FormIcon />]] },
  { name: "AUTOMATE", pad: 18, icons: [["Automated modeling", <AutomateIcon />]] },
  { name: "MODIFY", pad: 13, icons: [["Press pull", <PressPullIcon />], ["Fillet", <FilletIcon />], ["Shell", <ShellIcon />], ["Combine", <CombineIcon />], ["Split body", <SplitIcon />]] },
  { name: "ASSEMBLE", pad: 13, icons: [["New component", <NewComponentIcon />], ["Joint", <JointIcon />], ["Bill of materials", <BomIcon />]] },
  { name: "CONFIGURE", pad: 18, icons: [["Configure", <ConfigureIcon />], ["Configuration table", <ConfigTableIcon />]] },
  { name: "CONSTRUCT", pad: 16, icons: [["Offset plane", <PlaneIcon />]] },
  { name: "INSPECT", pad: 16, icons: [["Measure", <MeasureIcon />]] },
  { name: "INSERT", pad: 13, icons: [["Insert fastener", <BoltIcon />], ["Canvas", <CanvasIcon />]] },
];

const entries: { name: string; icons: React.ReactNode[]; picked?: boolean; tight?: boolean }[] = [
  { name: "Document Settings", icons: [<Gear size={16} />], tight: true },
  { name: "Named Views", icons: [<Folder />] },
  { name: "Selection Sets", icons: [<Folder />] },
  { name: "Contact: sets", icons: [<ContactIcon />] },
  { name: "Origin", icons: [<Eye off />, <Folder />] },
  { name: "Joints", icons: [<Eye />, <Folder />] },
  { name: "Sketches", icons: [<Eye />, <Folder />] },
  { name: "cam:1", icons: [<Eye />, <BodyIcon />] },
  { name: "follower:1", icons: [<Eye />, <BodyIcon />] },
  { name: "shaft:1", icons: [<Eye />, <BodyIcon />] },
  { name: "base:1", icons: [<Eye />, <BodyIcon pinned />] },
  { name: "in cam:1", icons: [<Eye />, <BodyIcon />], picked: true },
];

const stepIcons: Record<string, React.ReactNode> = {
  sketch: <EditSketchIcon />, component: <ComponentStepIcon />, extrude: <ExtrudeIcon size={20} />, combine: <CombineIcon size={20} />,
  cylinder: <CylinderIcon />, revolve: <RevolveIcon size={20} />, pipe: <PipeIcon />, split: <SplitStepIcon />, pin: <PinIcon />,
  copy: <CopyIcon />, joint: <JointStepIcon />,
};
const steps = "sketch component extrude extrude component sketch extrude extrude combine component sketch extrude cylinder component sketch revolve pipe split sketch extrude combine pin copy combine joint joint joint".split(" ");

const playback: [string, string][] = [
  ["Go to start", "M2 3H4V18H2ZM16 3V18L5 10.500Z"],
  ["Step back", "M15 4V17L3 10.500ZM16 6H17V15H16ZM18 8H19V13H18Z"],
  ["Play", "M3 1V19L18 10Z"],
  ["Step forward", "M7 4V17L19 10.500ZM5 6H6V15H5ZM3 8H4V13H3Z"],
  ["Go to end", "M16 3H18V18H16ZM4 3V18L15 10.500Z"],
];

const navTools: { name: string; menuGap?: number; art: React.ReactNode }[] = [
  { name: "Orbit", menuGap: 6, art: <><path stroke="#777" strokeWidth="1.300" strokeDasharray="4 1" d="M10 1Q14 2 14 10 14 18 10 19 6 18 6 10 6 2 10 1ZM1 10Q2 6 10 6 18 6 19 10 18 14 10 14 2 14 1 10Z" /><path stroke="#1677d2" strokeWidth="1.500" d="M8 10H12M10 8V12" /></> },
  { name: "Look at", art: <><path fill="#ddd" stroke="#777" d="M2 7H18V18H2Z" /><path fill="#777" d="M3 6 8 3 9 4 15 2 13 6Z" /><path fill="#9a9a9a" stroke="#555" d="M5 10H15V15H5Z" /></> },
  { name: "Pan", art: <path fill="#fafafa" stroke="#777" d="M5 17Q1 12 1 9 3 8 5 12V3Q6 2 7 3L8 9V2Q9 0 10 2L11 9 12 2Q14 1 14 3V10L16 5Q18 4 18 7L16 15 14 19H8Z" /> },
  { name: "Zoom", art: <><path stroke="#444" strokeWidth="3" d="M12 12 19 19" /><circle cx="8" cy="7.500" r="6" fill="#e6f3f3" stroke="#888" strokeWidth="1.500" /><path stroke="#333" d="M15 3.500H20M17.500 1V6M15 8.500H20" /></> },
  { name: "Fit", menuGap: 6, art: <><path stroke="#888" strokeDasharray="4 2" d="M1 1H19V19H1Z" /><path stroke="#444" strokeWidth="3" d="M12 12 18 18" /><circle cx="8" cy="7.500" r="6" fill="#e6f3f3" stroke="#888" strokeWidth="1.500" /></> },
  { name: "Display settings", menuGap: 3, art: <><path fill="#ddd" stroke="#777" d="M1 1H19V15H1Z" /><path fill="#88b2e4" stroke="#5577a5" d="M3 3H17V13H3Z" /><path fill="#888" d="M8 15H12V17H15V19H5V17H8Z" /></> },
  { name: "Grid and snaps", menuGap: 3, art: <><path fill="#e4e6ea" stroke="#666" d="M1 1H19V19H1Z" /><path fill="#adb6c6" d="M1 10H19V19H1Z" /><path stroke="#777" d="M4.500 1V19M8.500 1V19M12.500 1V19M16.500 1V19M1 5.500H19M1 9.500H19M1 13.500H19M1 16.500H19" /></> },
  { name: "Viewports", menuGap: 3, art: <><path fill="#c3d5ee" stroke="#5c7398" d="M1 2H19V18H1Z" /><path fill="#86a9d8" stroke="#5c7398" d="M2 3H9V9H2ZM11 3H18V9H11ZM2 11H9V17H2ZM11 11H18V17H11Z" /></> },
];

/* ---------- app ---------- */

export default function App() {
  return (
    <Shell>
      <GlobalStyle />
      <TitleBar>
        <svg width="18" height="20" viewBox="0 0 18 20"><path fill="#ff6b00" d="M0 2 2 0H16L18 2V15H0Z" /><path fill="#a33c00" d="M0 14H18V18L16 20H2L0 18Z" /><path fill="#fff" d="M6 3H13V5H8.500V7H12V9H8.500V12H6Z" /><path fill="#eec3a8" d="M6 16H8V18H6ZM9 16H10V18H9ZM11 16H13V18H11Z" /></svg>
        <h1>Autodesk Fusion(Student license expires in 28 days)</h1>
        <WindowControls>
          <button aria-label="Minimize"><Small w={12} h={12}><path stroke="#000" d="M0 5.500H12" /></Small></button>
          <button aria-label="Maximize"><Small w={12} h={12}><rect x=".5" y=".5" width="11" height="11" rx="1" stroke="#000" strokeWidth="1.200" /></Small></button>
          <button aria-label="Close"><Small w={12} h={12}><path stroke="#000" d="M0 0 12 12M12 0 0 12" /></Small></button>
        </WindowControls>
      </TitleBar>

      <TabBar>
        <QuickTools>
          <ToolButton aria-label="Data panel"><Small><path fill="#666" d="M1 1h5v5H1zM7.500 1h5v5h-5zM14 1h5v5h-5zM1 7.500h5v5H1zM7.500 7.500h5v5h-5zM14 7.500h5v5h-5zM1 14h5v5H1zM7.500 14h5v5h-5zM14 14h5v5h-5z" /></Small></ToolButton>
          <ToolButton aria-label="File"><Small><path fill="#666" d="M1 0H11V7H17V20H1ZM12 0 17 5H12Z" /></Small><Caret /></ToolButton>
          <ToolButton aria-label="Save"><Small><path fill="#666" fillRule="evenodd" d="M2 1H17L19 3V19H4L2 17ZM6 1V8H15V1ZM6 12V19H15V12Z" /><path fill="#666" d="M11 2h3v5h-3zM7 14h7v1H7zM7 16h7v1H7z" /></Small></ToolButton>
          <ToolGroup $gap={15}>
            <ToolButton aria-label="Undo"><Small><path stroke="#666" strokeWidth="2.500" d="M3 8H10Q17 8 17 18M9 2 3 8 9 14" /></Small><Caret /></ToolButton>
            <ToolButton aria-label="Redo" $faded><Small><path stroke="#666" strokeWidth="2.500" d="M17 8H10Q3 8 3 18M11 2 17 8 11 14" /></Small><Caret /></ToolButton>
          </ToolGroup>
        </QuickTools>
        <ShortTab $w={49} $ml={11} aria-label="Home"><Small><path fill="#777" d="M10 2 19 11H17V19H12V13H8V19H3V11H1ZM14 3H16V7L14 5Z" /></Small></ShortTab>
        <DocumentTab>
          <DocumentName>
            <Small><path fill="#ff8a3c" d="M1 5 11 1 19 4 9 9Z" /><path fill="#f26b1f" d="M1 5 9 9V19L2 15Z" /><path fill="#d9530f" d="M9 9 19 4 18 14 9 19Z" /></Small>
            Cam and Follower mechanism v1*
          </DocumentName>
          <button aria-label="Close tab"><Small w={12} h={12}><path stroke="currentColor" strokeWidth="1.500" d="M1 1 11 11M11 1 1 11" /></Small></button>
        </DocumentTab>
        <ShortTab $w={34} $ml={6} aria-label="New tab"><Small w={16} h={16}><path stroke="#777" strokeWidth="3.500" d="M7 0V14M0 7H14" /></Small></ShortTab>
        <Account>
          <LicenseButton>Expiring Soon</LicenseButton>
          <ToolGroup $gap={21}>
            <ToolButton aria-label="Extensions"><Small><circle cx="10" cy="10" r="8.500" stroke="#5f5f5f" strokeWidth="3" /><path fill="#5f5f5f" d="M6 15 8 8 13 2 19 8 16 15 10 18Z" /><path stroke="#d5d5d5" strokeWidth="1.500" d="M9 8 12 11M12 5 15 8M9 8 14 3M12 11 17 6" /></Small></ToolButton>
            <ToolButton aria-label="Job status"><Small><circle cx="10" cy="10" r="9" stroke="#5f5f5f" strokeWidth="1.500" /><circle cx="10" cy="10" r="7" fill="#5f5f5f" /><path stroke="#e0e0e0" strokeWidth="1.500" d="M10 5V10.500H14" /></Small></ToolButton>
            <ToolButton aria-label="Notifications"><Small><path fill="#5f5f5f" d="M9 0H11V2Q16 3 16 9 16 13 18 15V16H2V15Q4 13 4 9 4 3 9 2ZM8 18H12L10 20Z" /></Small></ToolButton>
            <ToolButton aria-label="Help"><Small><circle cx="10" cy="10" r="10" fill="#5f5f5f" /><path stroke="#ddd" strokeWidth="2.500" d="M6.500 8Q6.500 4.500 10 4.500 13.500 4.500 13.500 7.500 13.500 9 10 11V13M10 14.500V17" /></Small></ToolButton>
          </ToolGroup>
          <Avatar>SG</Avatar>
        </Account>
      </TabBar>

      <Ribbon>
        <WorkspaceButton>DESIGN <Caret w={7} /></WorkspaceButton>
        <div>
          <RibbonTabs>{tabs.map((t, i) => <RibbonTab key={t} $active={i === 0}>{t}</RibbonTab>)}</RibbonTabs>
          <Panels>
            {panels.map((p) => (
              <Panel key={p.name} $pad={p.pad}>
                <IconRow>{p.icons.map(([n, icon]) => <button key={n} aria-label={n}>{icon}</button>)}</IconRow>
                <PanelLabel>{p.name}<Caret w={7} /></PanelLabel>
              </Panel>
            ))}
            <Panel $pad={18}>
              <SelectedTool aria-label="Select"><SelectIcon /></SelectedTool>
              <PanelLabel>SELECT<Caret w={7} /></PanelLabel>
            </Panel>
          </Panels>
        </div>
      </Ribbon>

      <Viewport>
        <Model />
        <BrowserDock>
          <DockHeader>
            <HeaderSlot><Small w={14} h={8}><path fill="#333" d="M7 0V8L1 4ZM14 0V8L8 4Z" /></Small></HeaderSlot>
            <h2>BROWSER</h2>
            <button aria-label="Collapse browser"><RoundSign /></button>
          </DockHeader>
          <Tree>
            <TreeRow $root>
              <Expander $w={23} aria-label="Collapse"><Small w={10} h={10}><path fill="#555" stroke="#000" d="M9.500.500V9.500H.500Z" /></Small></Expander>
              <RootEntry>
                <IconCell><Eye /></IconCell>
                <RootName><IconCell><AssemblyIcon /></IconCell><RootTitle>Cam and Follower mechanism ...</RootTitle></RootName>
                <ActiveRadio type="radio" defaultChecked aria-label="Activate component" />
              </RootEntry>
            </TreeRow>
            {entries.map((e) => (
              <TreeRow key={e.name}>
                <Expander $w={23} aria-label={`Expand ${e.name}`}><Small w={10} h={12}><path fill="#fff" stroke="#333" d="M1.500.800V11.200L8.500 6Z" /></Small></Expander>
                <Entry>
                  {e.icons.map((icon, i) => <IconCell key={i}>{icon}</IconCell>)}
                  <EntryLabel $picked={e.picked} $tight={e.tight}>{e.name}</EntryLabel>
                </Entry>
              </TreeRow>
            ))}
          </Tree>
        </BrowserDock>
        <CubeSlot><ViewCube /></CubeSlot>
        <CommentsDock>
          <DockHeader $flatTop>
            <HeaderSlot />
            <h2>COMMENTS</h2>
            <button aria-label="Expand comments"><RoundSign plus /></button>
          </DockHeader>
        </CommentsDock>
        <NavBar>
          {navTools.map((n) => <NavButton key={n.name} $gap={n.menuGap ?? 0} aria-label={n.name}><Small>{n.art}</Small>{n.menuGap && <Caret w={7} />}</NavButton>)}
        </NavBar>
      </Viewport>

      <Timeline>
        <Playback>{playback.map(([n, d]) => <button key={n} aria-label={n}><Small><path fill="#666" d={d} /></Small></button>)}</Playback>
        <History>{steps.map((s, i) => <Step key={i}>{stepIcons[s]}</Step>)}</History>
        <Marker aria-label="Timeline marker"><Small w={16} h={41}><path fill="#5f5f5f" d="M0 0H16V5L11 9H9V41H7V9H5L0 5Z" /></Small></Marker>
        <SettingsButton aria-label="Timeline settings"><Gear size={20} /></SettingsButton>
      </Timeline>
    </Shell>
  );
}
